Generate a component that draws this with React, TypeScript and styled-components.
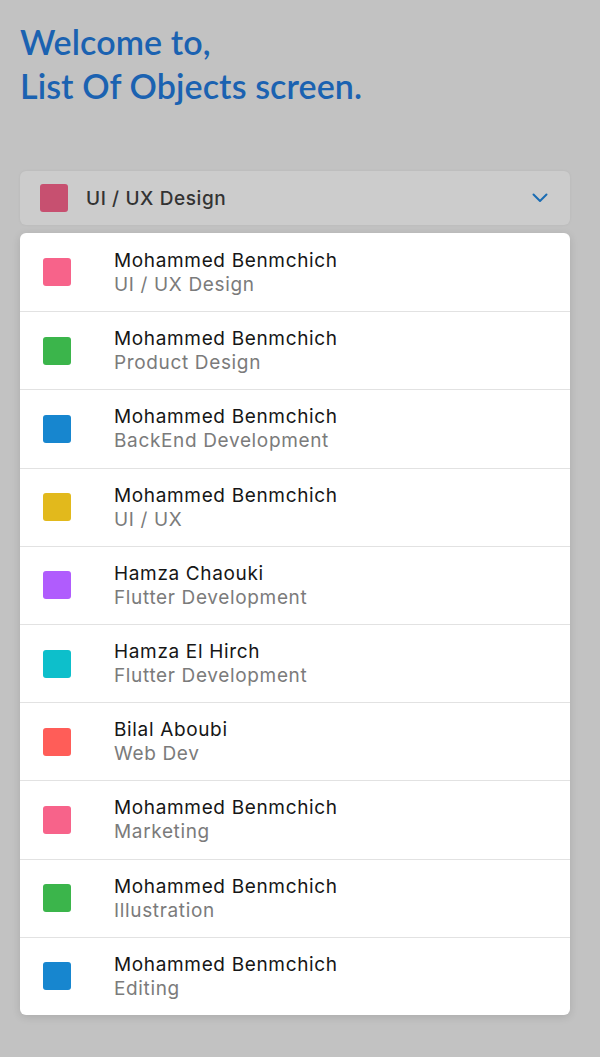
import React from "react";
import styled, { createGlobalStyle } from "styled-components";

const Global = createGlobalStyle`
  html, body { margin: 0; padding: 0; background: #c2c2c2; }
  body { font-family: Inter, "Liberation Sans", sans-serif; }
`;

const Page = styled.div`
  width: 600px;
  min-height: 1057px;
  box-sizing: border-box;
  padding: 20px 30px 0 20px;
  background: #c2c2c2;
`;

const Title = styled.h1`
  margin: 0;
  font-family: Lato, "Liberation Sans", sans-serif;
  font-weight: 600;
  font-size: 34px;
  line-height: 44px;
  color: #1b62b1;
  letter-spacing: 0.1px;
`;

const Select = styled.div`
  margin-top: 63px;
  height: 54px;
  box-sizing: border-box;
  display: flex;
  align-items: center;
  padding: 0 22px 0 20px;
  background: #cccccc;
  border-radius: 6px;
  box-shadow: 0 0 3px rgba(0, 0, 0, 0.06);
`;

const Swatch = styled.span<{ $color: string }>`
  flex: none;
  width: 28px;
  height: 28px;
  border-radius: 3px;
  background: ${(p) => p.$color};
`;

const SelectLabel = styled.span`
  margin-left: 18px;
  flex: 1;
  font-size: 19px;
  font-weight: 500;
  letter-spacing: 0.6px;
  color: #333333;
`;

const Card = styled.ul`
  list-style: none;
  margin: 8px 0 0;
  padding: 0;
  background: #ffffff;
  border-radius: 6px;
  box-shadow: 0 2px 8px rgba(0, 0, 0, 0.12);
  overflow: hidden;
`;

const Row = styled.li`
  height: 78.2px;
  box-sizing: border-box;
  display: flex;
  align-items: center;
  padding: 0 0 0 23px;
  & + & { border-top: 1.5px solid #e2e2e2; }
`;

const Texts = styled.div`
  margin-left: 43px;
  display: flex;
  flex-direction: column;
  gap: 1px;
`;

const Name = styled.span`
  font-size: 19px;
  line-height: 23px;
  color: #161616;
  letter-spacing: 0.65px;
`;

const Sub = styled.span`
  font-size: 19px;
  line-height: 23px;
  color: #7b7b7b;
  letter-spacing: 0.65px;
`;

const items = [
  { name: "Mohammed Benmchich", sub: "UI / UX Design", color: "#f7638a" },
  { name: "Mohammed Benmchich", sub: "Product Design", color: "#3bb54b" },
  { name: "Mohammed Benmchich", sub: "BackEnd Development", color: "#1786cf" },
  { name: "Mohammed Benmchich", sub: "UI / UX", color: "#e2b91c" },
  { name: "Hamza Chaouki", sub: "Flutter Development", color: "#b05cfd" },
  { name: "Hamza El Hirch", sub: "Flutter Development", color: "#0dbfcb" },
  { name: "Bilal Aboubi", sub: "Web Dev", color: "#ff5d58" },
  { name: "Mohammed Benmchich", sub: "Marketing", color: "#f7638a" },
  { name: "Mohammed Benmchich", sub: "Illustration", color: "#3bb54b" },
  { name: "Mohammed Benmchich", sub: "Editing", color: "#1786cf" },
];

export default function App() {
  return (
    <Page>
      <Global />
      <Title>
        Welcome to,
        <br />
        List Of Objects screen.
      </Title>
      <Select>
        <Swatch $color="#c75070" />
        <SelectLabel>UI / UX Design</SelectLabel>
        <svg width="16" height="10" viewBox="0 0 16 10" fill="none">
          <path d="M1.5 1.5 L8 8 L14.5 1.5" stroke="#1a6cb3" strokeWidth="2" strokeLinecap="round" strokeLinejoin="round" />
        </svg>
      </Select>
      <Card>
        {items.map((it, i) => (
          <Row key={i}>
            <Swatch $color={it.color} />
            <Texts>
              <Name>{it.name}</Name>
              <Sub>{it.sub}</Sub>
            </Texts>
          </Row>
        ))}
      </Card>
    </Page>
  );
}
